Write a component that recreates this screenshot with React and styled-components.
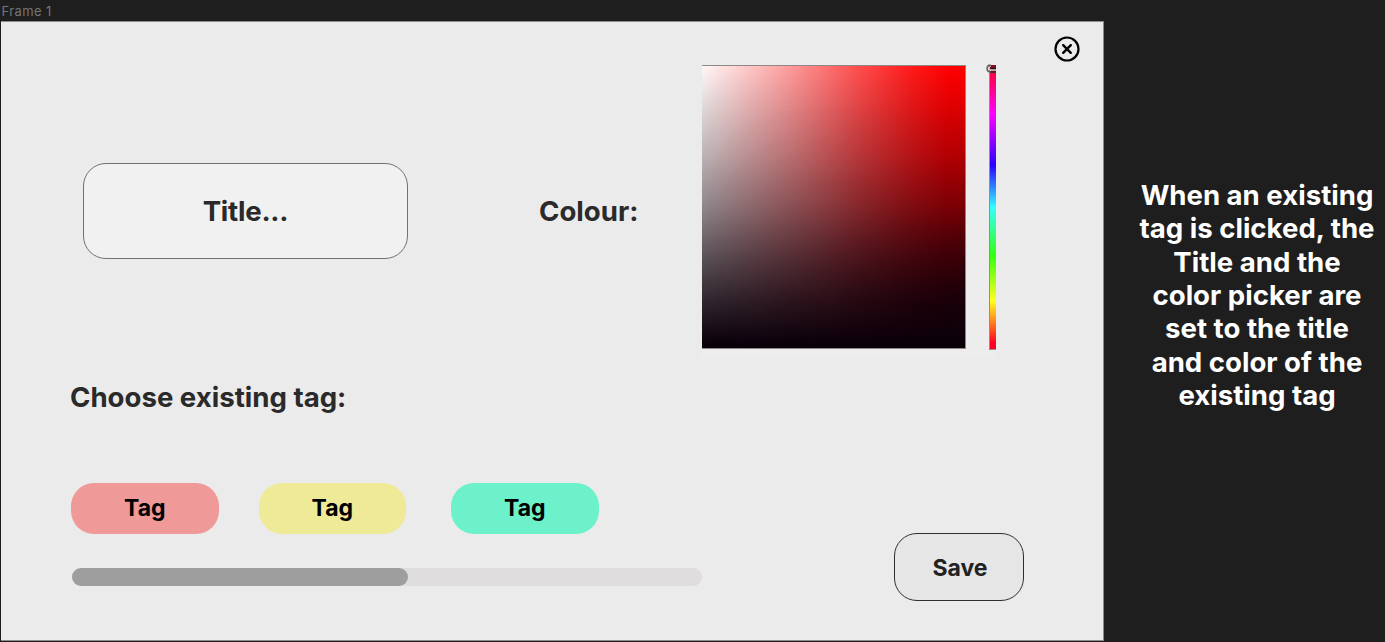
import React from "react";
import styled, { createGlobalStyle } from "styled-components";

const GlobalStyle = createGlobalStyle`
  * { box-sizing: border-box; }
  body {
    margin: 0;
    background: #1e1e1e;
    font-family: Inter, "Liberation Sans", sans-serif;
    overflow: hidden;
  }
`;

const Canvas = styled.main`
  display: flex;
  width: 1385px;
  height: 642px;
  background: #1e1e1e;
`;

const FrameColumn = styled.div`
  width: 1104px;
  padding-left: 1px;
`;

const FrameName = styled.div`
  height: 21px;
  padding-left: 0.5px;
  font-size: 13px;
  letter-spacing: 0.4px;
  line-height: 22px;
  color: #757575;
`;

const Frame = styled.section`
  display: flex;
  flex-direction: column;
  width: 1103px;
  height: 620px;
  background: #ebebeb;
  border: 1px solid #8c8c8c;
  border-width: 1px 1px 1px 0;
`;

const Editor = styled.div`
  display: flex;
  align-items: flex-start;
  height: 336px;
  padding-left: 82px;
`;

const TitleInput = styled.div`
  width: 325px;
  height: 96px;
  margin-top: 141px;
  border: 1px solid #717171;
  border-radius: 23px;
  background: #f1f1f1;
  color: #2a2a2a;
  font-size: 27.6px;
  font-weight: 700;
  letter-spacing: -0.25px;
  line-height: 95px;
  text-align: center;
`;

const Label = styled.span`
  width: 163px;
  margin: 172px 0 0 131px;
  color: #2a2a2a;
  font-size: 27.6px;
  font-weight: 700;
  line-height: 34px;
`;

const Picker = styled.div`
  display: flex;
  justify-content: space-between;
  width: 294px;
  height: 294px;
  margin-top: 42px;
  padding-top: 1px;
  background: #ededed;
`;

const Shade = styled.div`
  width: 264.4px;
  height: 284px;
  border: 1px solid #8d8788;
  border-left: 0;
  background:
    linear-gradient(
      to bottom,
      rgba(10, 0, 10, 0) 0%,
      rgba(10, 0, 10, 0.28) 32%,
      rgba(10, 0, 10, 0.46) 50%,
      rgba(10, 0, 10, 0.67) 68%,
      rgba(10, 0, 10, 0.86) 85%,
      rgb(10, 0, 10) 99%
    ),
    linear-gradient(to right, #fff8f8 0%, #ff9c9c 33%, #ff4c4c 60%, #ff1a1a 80%, #f00 94%);

  &::after {
    content: "";
    display: block;
    height: 100%;
    background: linear-gradient(
      to bottom,
      rgba(10, 0, 10, 0) 12%,
      rgba(10, 0, 10, 0.05) 32%,
      rgba(10, 0, 10, 0.16) 50%,
      rgba(10, 0, 10, 0.4) 68%,
      rgba(10, 0, 10, 0.65) 85%
    );
    mask-image: linear-gradient(to right, transparent, rgba(0, 0, 0, 0.3) 50%, #000);
  }
`;

const HueSlider = styled.div`
  position: relative;
  width: 7px;
  height: 285px;
  border: 1px solid #9b8b8e;
  border-right: 0;
  background: linear-gradient(
    to bottom,
    #ff0022 0%,
    #ff00ff 17%,
    #2a00ff 35%,
    #3ff 50%,
    #33ff11 67%,
    #ffff1a 83%,
    #ff0022 98%
  );
`;

const HueThumb = styled.svg`
  position: absolute;
  left: -4px;
  top: -2px;
`;

const CloseButton = styled.button`
  display: flex;
  margin: 14px 0 0 58px;
  padding: 0;
  border: 0;
  background: none;
`;

const Heading = styled.h2`
  margin: 22px 0 0 69px;
  color: #2a2a2a;
  font-size: 27.6px;
  font-weight: 700;
  line-height: 34px;
`;

const BottomRow = styled.div`
  display: flex;
  align-items: flex-start;
  padding: 69px 0 0 70px;
`;

const TagArea = styled.div`
  width: 631px;
`;

const TagList = styled.div`
  display: flex;
`;

const Tag = styled.button`
  width: 147.5px;
  height: 50.5px;
  margin: 0 ${(p) => p.$gap}px 0 0;
  padding: 0;
  border: 0;
  border-radius: 23px;
  background: ${(p) => p.$color};
  color: #000;
  font: 700 23px/51px Inter, "Liberation Sans", sans-serif;
`;

const ScrollTrack = styled.div`
  height: 18.5px;
  margin: 34px 0 0 1px;
  border-radius: 9px;
  background: #dfdddd;
`;

const ScrollThumb = styled.div`
  width: 336px;
  height: 18.5px;
  border-radius: 9px;
  background: #9e9e9e;
`;

const SaveButton = styled.button`
  width: 130px;
  height: 68px;
  margin: 50px 0 0 192px;
  padding: 1px 0 0 2px;
  border: 1px solid #2f2f2f;
  border-radius: 23px;
  background: #e6e6e6;
  color: #222;
  font: 700 23px/66px Inter, "Liberation Sans", sans-serif;
`;

const Note = styled.p`
  width: 270px;
  margin: 179px 0 0 18px;
  padding-left: 7px;
  color: #fff;
  font-size: 27.6px;
  font-weight: 700;
  line-height: 33.35px;
  text-align: center;
  white-space: pre-line;
`;

const tags = [
  { color: "#ef9999", gap: 40 },
  { color: "#eeea98", gap: 45 },
  { color: "#6df1ca", gap: 0 },
];

const note = `When an existing
tag is clicked, the
Title and the
color picker are
set to the title
and color of the
existing tag`;

export default function App() {
  return (
    <Canvas>
      <GlobalStyle />
      <FrameColumn>
        <FrameName>Frame 1</FrameName>
        <Frame>
          <Editor>
            <TitleInput>Title...</TitleInput>
            <Label>Colour:</Label>
            <Picker>
              <Shade />
              <HueSlider>
                <HueThumb width="10" height="10" viewBox="0 0 10 10" fill="none">
                  <path d="M4 1H10V8H4Z" fill="#7a1020" />
                  <path d="M5 4.5H10" stroke="#111" strokeWidth="1" />
                  <path d="M4 6H10" stroke="#ddd" strokeWidth="1.4" />
                  <path d="M4 8.3H10" stroke="#333" strokeWidth="1.2" />
                  <path d="M4.6 1C0 1 0 8 4.6 8" stroke="#666" strokeWidth="1.7" />
                  <path d="M5 2.2C2.6 3 2.6 5.8 5 6.6" stroke="#ddd" strokeWidth="1" />
                </HueThumb>
              </HueSlider>
            </Picker>
            <CloseButton aria-label="Close">
              <svg width="26" height="26" viewBox="0 0 26 26" fill="none" stroke="#000">
                <circle cx="13" cy="13" r="11.5" strokeWidth="2.2" />
                <path d="M9.2 9.2L16.8 16.8M16.8 9.2L9.2 16.8" strokeWidth="2.4" strokeLinecap="round" />
              </svg>
            </CloseButton>
          </Editor>
          <Heading>Choose existing tag:</Heading>
          <BottomRow>
            <TagArea>
              <TagList>
                {tags.map((tag) => (
                  <Tag key={tag.color} $color={tag.color} $gap={tag.gap}>
                    Tag
                  </Tag>
                ))}
              </TagList>
              <ScrollTrack>
                <ScrollThumb />
              </ScrollTrack>
            </TagArea>
            <SaveButton>Save</SaveButton>
          </BottomRow>
        </Frame>
      </FrameColumn>
      <Note>{note}</Note>
    </Canvas>
  );
}
